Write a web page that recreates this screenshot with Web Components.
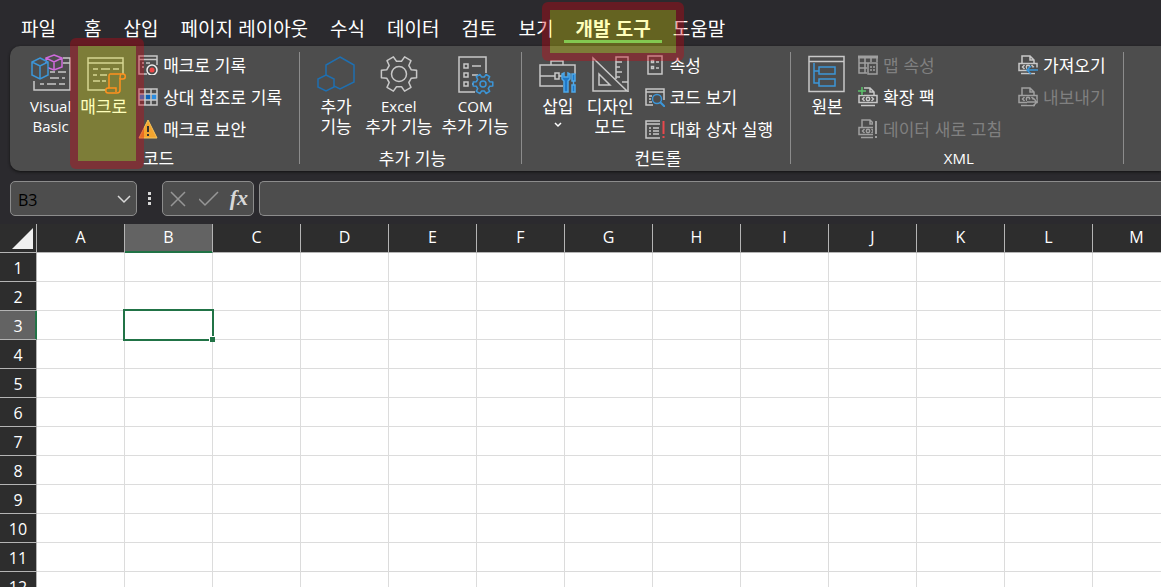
<!DOCTYPE html>
<html lang="ko">
<head>
<meta charset="UTF-8">
<meta name="viewport" content="width=device-width, initial-scale=1.0">
<title>Excel - 개발 도구</title>
<style>
    body {
        margin: 0;
        height: 100vh;
        overflow: hidden;
        background-color: #2b2a2e;
        color: #fff;
        --latin: "Open Sans", "Noto Sans CJK KR", sans-serif;
        --korean: "Noto Sans CJK KR", "Open Sans", sans-serif;
        font-family: var(--latin);
        --ribbon-color: #4d4d4d;
        --line-color: #8c8c8c;
        --header-color: #2d2d2d;
        --header-active: #636363;
        --excel-green: #217346;
    }
</style>
</head>
<body>
<excel-window>
    <ribbon-tab slot="tabs" file>파일</ribbon-tab>
    <ribbon-tab slot="tabs">홈</ribbon-tab>
    <ribbon-tab slot="tabs">삽입</ribbon-tab>
    <ribbon-tab slot="tabs">페이지 레이아웃</ribbon-tab>
    <ribbon-tab slot="tabs">수식</ribbon-tab>
    <ribbon-tab slot="tabs">데이터</ribbon-tab>
    <ribbon-tab slot="tabs">검토</ribbon-tab>
    <ribbon-tab slot="tabs">보기</ribbon-tab>
    <ribbon-tab slot="tabs" active marked>개발 도구</ribbon-tab>
    <ribbon-tab slot="tabs">도움말</ribbon-tab>

    <ribbon-group slot="ribbon" label="코드">
        <ribbon-button icon="visual-basic"><span lang="en">Visual Basic</span></ribbon-button>
        <ribbon-button icon="macro" marked><span>매크로</span></ribbon-button>
        <command-list>
            <ribbon-command icon="record">매크로 기록</ribbon-command>
            <ribbon-command icon="relative">상대 참조로 기록</ribbon-command>
            <ribbon-command icon="warning">매크로 보안</ribbon-command>
        </command-list>
    </ribbon-group>

    <ribbon-group slot="ribbon" label="추가 기능">
        <ribbon-button icon="addins"><span class="wrap">추가 기능</span></ribbon-button>
        <ribbon-button icon="gear"><span lang="en">Excel</span><span>추가 기능</span></ribbon-button>
        <ribbon-button icon="com"><span lang="en">COM</span><span>추가 기능</span></ribbon-button>
    </ribbon-group>

    <ribbon-group slot="ribbon" label="컨트롤">
        <ribbon-button icon="toolbox" menu><span>삽입</span></ribbon-button>
        <ribbon-button icon="design"><span class="wrap">디자인 모드</span></ribbon-button>
        <command-list>
            <ribbon-command icon="properties">속성</ribbon-command>
            <ribbon-command icon="view-code">코드 보기</ribbon-command>
            <ribbon-command icon="run-dialog">대화 상자 실행</ribbon-command>
        </command-list>
    </ribbon-group>

    <ribbon-group slot="ribbon" label="XML">
        <ribbon-button icon="source"><span>원본</span></ribbon-button>
        <command-list>
            <ribbon-command icon="map" disabled>맵 속성</ribbon-command>
            <ribbon-command icon="expansion">확장 팩</ribbon-command>
            <ribbon-command icon="refresh" disabled>데이터 새로 고침</ribbon-command>
        </command-list>
        <command-list>
            <ribbon-command icon="import">가져오기</ribbon-command>
            <ribbon-command icon="export" disabled>내보내기</ribbon-command>
        </command-list>
    </ribbon-group>

    <formula-bar slot="formula" cell="B3"></formula-bar>
    <sheet-grid slot="sheet" columns="13" rows="12" column="B" row="3"></sheet-grid>
</excel-window>

<script>
// outline of a six-tooth gear
function gear(cx, cy, outer, inner) {
    const points = [];
    for (let i = 0; i < 6; i++) {
        const a = i * 60;
        [[a - 19, inner], [a - 12, outer], [a + 12, outer], [a + 19, inner]].forEach(([deg, r]) => {
            const rad = deg * Math.PI / 180;
            points.push((cx + r * Math.cos(rad)).toFixed(1) + "," + (cy + r * Math.sin(rad)).toFixed(1));
        });
    }
    return `<polygon points="${points.join(" ")}" stroke-linejoin="round"/>`;
}

const xmlDoc = `<path d="M4 8V1h8l4 4v3M12 1v4h4M1 8.500h18v7H1zM3 18.500h14" /><path d="M6.500 10 4.500 12l2 2M13.500 10l2 2-2 2"/><circle cx="10" cy="12" r="1.700"/>`;

// large icons are drawn on 40x40, small ones on 20x20
const ICONS = {
    "visual-basic": `<path d="M32 4h7v32H3V27M32 9h7"/><path stroke-width="1.300" d="M19 18h5M27 18h8M19 24h9M31 24h3M9 30h4M16 30h9M28 30h6"/>
        <path fill="#4d4d4d" stroke="#cf6bdd" d="M23 1l8 3v9l-8 3-8-3V4zM15 4l8 4 8-4M23 8v8"/>
        <path fill="#4d4d4d" stroke="#3c96d8" d="M9 4l8 4v13l-8 4-8-4V8zM1 8l8 4 8-4M9 12v13"/>`,
    "macro": `<path d="M22 36H4V4h35v16M4 9h35"/><path stroke-width="1.300" d="M9 15h5M17 15h9M29 15h6M9 21h4M16 21h7M9 27h7M18 27h4"/>
        <g stroke="#ff6a2a" fill="#4d4d4d"><path d="M26 20h13c3 0 3 5 0 5h-3v11c0 2-1 3-3 3H24c-3 0-3-5 0-5h1V22c0-1 0-2 1-2z"/><path d="M37 20c-1 1-1 2-1 5M24 34h8v4"/></g>`,
    "addins": `<g stroke="#1f6fb0"><path d="M24 3l14 8v17l-14 7-14-7V11z"/><path fill="#4d4d4d" d="M10 21l8 4v8l-8 4-8-4v-8z"/></g>`,
    "gear": gear(20, 20, 18, 13) + `<circle cx="20" cy="20" r="7.500"/>`,
    "com": `<path d="M31 19V3H4v35h16M17 12h9M17 21h6M17 30h2"/><path d="M9 10h4v4H9zM9 19h4v4H9zM9 28h4v4H9z"/>
        <g stroke="#3c96d8" fill="#4d4d4d">${gear(28, 30, 10, 7)}<circle cx="28" cy="30" r="3"/></g>`,
    "toolbox": `<path d="M25 32H2V11h35v9M13 11V7h12v4M2 22h15M21 22h5"/><path d="M17 19h4v6h-4z"/>
        <g stroke="#4fa8e8" stroke-width="1.500" fill="#1f78c8"><path d="M24 20v5l2 2v11h4V27l2-2v-5l-2-1v4h-4v-4z"/><path d="M34 20h3v7h-3zM34 31h3v7h-3zM35.500 27v4"/></g>`,
    "design": `<path d="M3 4v33h34z"/><path d="M9 20v11h11z"/><path d="M26 25V3h12v35M26 8h6M26 13h4M26 18h6M26 23h4M32 28h6"/>`,
    "source": `<path d="M2 2.500h35v35H2z"/><path d="M2 7.500h35"/><path stroke="#3c96d8" d="M7 9v20h5M7 17h5M12 13h16v7H12zM12 25h16v7H12z"/>`,
    "record": `<path d="M9 19H1V1h18v9M1 4.500h18M4 8h2M8 8h4M4 12h2"/><circle cx="14" cy="15" r="5" fill="#4d4d4d" stroke="#eee"/><circle cx="14" cy="15" r="2.500" fill="#f04747" stroke="none"/>`,
    "relative": `<path stroke="none" fill="#2b8de0" d="M1 7h5v6H1zM14 7h5v6h-5z"/><path stroke="none" fill="#0b62b8" d="M7 7h6v6H7z"/><path d="M1 2h18v16H1zM1 7h18M1 13h18M7 2v16M13 2v16"/>`,
    "warning": `<path fill="#f3a52f" stroke="#f8c55c" stroke-width="1" stroke-linejoin="round" d="M10 1l9 18H1z"/><path stroke="#333" stroke-width="2" d="M10 7v6M10 15v2"/>`,
    "properties": `<path d="M3 1h14v18H3z"/><path d="M6.500 5.500h2v2h-2zM6.500 11.500h2v2h-2zM11 7h3M11 13h3"/>`,
    "view-code": `<path d="M8 18H1V2h18v11M1 5h18M4 9h3M4 12h2M4 15h3"/><circle cx="12" cy="12" r="4.500" stroke="#3c96d8"/><path stroke="#3c96d8" stroke-width="2" d="M15 15l5 5"/>`,
    "run-dialog": `<path d="M15 2H1v17h14M1 5h14M4 9h2M8 9h6M4 12h2M8 12h6M4 15h2M8 15h6"/><path stroke="#e8484c" stroke-width="2" d="M18.500 2v13M18.500 17v2"/>`,
    "map": `<path stroke-width="3" d="M0 2h20"/><path d="M1 3v15h8M19 3v4M1 8h9M1 13h8M7 3v15M13 3v4M10 8h9v11h-9z"/><path stroke-dasharray="2 1" d="M12 12h5M12 15h5"/>`,
    "expansion": xmlDoc + `<path stroke="#4d4d4d" stroke-width="4" d="M4 0v8M0 4h8"/><path stroke="#5cc46c" d="M4 0v8M0 4h8"/>`,
    "refresh": xmlDoc + `<path stroke="#4d4d4d" stroke-width="5" d="M17.500 2v18"/><path stroke-width="2" d="M18 2v13M18 17v2"/>`,
    "import": xmlDoc + `<path stroke="#4d4d4d" stroke-width="5" d="M20 15H9"/><path stroke="#3c96d8" d="M20 15H9M13 11l-4 4 4 4"/>`,
    "export": xmlDoc + `<path stroke="#4d4d4d" stroke-width="5" d="M9 15h10"/><path d="M9 15h10M15 11l4 4-4 4"/>`
};

function icon(name, size) {
    return `<svg width="${size}" height="${size}" viewBox="0 0 ${size} ${size}" fill="none" stroke="currentColor" stroke-width="1.500" aria-hidden="true">${ICONS[name] || ""}</svg>`;
}

class BaseElement extends HTMLElement {
    constructor() {
        super();
        this.attachShadow({mode: "open"});
    }
    connectedCallback() {
        this.render();
    }
    render() {
        const template = document.createElement("template");
        template.innerHTML = `<style>${this.getStyles()}</style>${this.getTemplate()}`;
        this.shadowRoot.innerHTML = "";
        this.shadowRoot.appendChild(template.content.cloneNode(true));
    }
}

class ExcelWindow extends BaseElement {
    getStyles() {
        return `
            :host { display: block; }
            nav {
                display: flex;
                padding: 16px 0 3px 10px;
            }
            .ribbon {
                display: flex;
                margin-left: 10px;
                padding: 6px 0 7px 4px;
                border-radius: 10px 0 0 10px;
                background-color: var(--ribbon-color);
                box-shadow: 0 1px 3px #111;
            }
            .formula { padding: 10px 0 8px 10px; }
        `;
    }
    getTemplate() {
        return `
            <nav role="tablist"><slot name="tabs"></slot></nav>
            <section class="ribbon"><slot name="ribbon"></slot></section>
            <div class="formula"><slot name="formula"></slot></div>
            <slot name="sheet"></slot>
        `;
    }
}
customElements.define("excel-window", ExcelWindow);

// translucent frame that points at a control
class CalloutFrame extends BaseElement {
    getStyles() {
        return `
            :host {
                position: absolute;
                z-index: 2;
                box-sizing: border-box;
                border: 8px solid rgba(211, 0, 15, 0.35);
                border-radius: 6px;
                background-color: rgba(255, 255, 0, 0.27);
                background-clip: padding-box;
                pointer-events: none;
            }
        `;
    }
    getTemplate() {
        return "";
    }
}
customElements.define("callout-frame", CalloutFrame);

class RibbonTab extends BaseElement {
    getStyles() {
        return `
            :host {
                display: block;
                position: relative;
            }
            :host([file]) { margin-right: 6px; }
            button {
                display: block;
                margin: 0;
                padding: 0 11px;
                border: 0;
                border-bottom: 3px solid transparent;
                background: none;
                color: inherit;
                font: 19px/24px var(--korean);
                white-space: nowrap;
            }
            :host([active]) button {
                border-color: #56b46e;
                font-weight: bold;
            }
            callout-frame { inset: -14px -22px -18px; }
        `;
    }
    getTemplate() {
        return `
            <button type="button" role="tab" aria-selected="${this.hasAttribute("active")}"><slot></slot></button>
            ${this.hasAttribute("marked") ? "<callout-frame></callout-frame>" : ""}
        `;
    }
}
customElements.define("ribbon-tab", RibbonTab);

class RibbonGroup extends BaseElement {
    getStyles() {
        return `
            :host {
                display: flex;
                flex-direction: column;
                gap: 10px;
                padding: 0 10px 0 14px;
                border-right: 1px solid var(--line-color);
            }
            .commands {
                display: flex;
                gap: 5px;
                height: 90px;
            }
            .label {
                font: 17px/12px var(--korean);
                text-align: center;
            }
            .label:lang(en) { font: 15px/12px var(--latin); }
        `;
    }
    getTemplate() {
        const label = this.getAttribute("label") || "";
        const lang = /^[A-Z]+$/.test(label) ? "en" : "ko";
        return `
            <div class="commands"><slot></slot></div>
            <div class="label" lang="${lang}">${label}</div>
        `;
    }
}
customElements.define("ribbon-group", RibbonGroup);

class RibbonButton extends BaseElement {
    getStyles() {
        return `
            :host {
                display: block;
                position: relative;
            }
            button {
                display: flex;
                flex-direction: column;
                align-items: center;
                min-width: 44px;
                height: 100%;
                margin: 0;
                padding: 2px;
                border: 0;
                background: none;
                color: inherit;
                font: 17px/20px var(--korean);
                white-space: nowrap;
            }
            svg {
                flex: none;
                color: #c8c8c8;
                overflow: visible;
            }
            .icon {
                height: 42px;
            }
            ::slotted([lang=en]) {
                width: min-content;
                font: 15px/20px var(--latin);
                white-space: normal;
            }
            ::slotted(.wrap) {
                width: min-content;
                white-space: normal;
                word-break: keep-all;
            }
            .arrow {
                margin-top: 6px;
                color: #fff;
            }
            callout-frame { inset: -14px -15px -27px -8px; }
        `;
    }
    getTemplate() {
        return `
            <button type="button">
                <span class="icon">${icon(this.getAttribute("icon"), 40)}</span>
                <slot></slot>
                ${this.hasAttribute("menu") ? `<svg class="arrow" width="8" height="6" viewBox="0 0 8 6" fill="none" stroke="currentColor" stroke-width="1.500"><path d="M1 1l3 3 3-3"/></svg>` : ""}
            </button>
            ${this.hasAttribute("marked") ? "<callout-frame></callout-frame>" : ""}
        `;
    }
}
customElements.define("ribbon-button", RibbonButton);

class CommandList extends BaseElement {
    getStyles() {
        return `
            :host {
                display: flex;
                flex-direction: column;
                gap: 6px;
                padding: 0 7px 0 4px;
            }
        `;
    }
    getTemplate() {
        return `<slot></slot>`;
    }
}
customElements.define("command-list", CommandList);

class RibbonCommand extends BaseElement {
    getStyles() {
        return `
            :host { display: block; }
            button {
                display: flex;
                align-items: center;
                gap: 5px;
                margin: 0;
                padding: 0;
                border: 0;
                background: none;
                color: inherit;
                font: 17px/26px var(--korean);
                white-space: nowrap;
            }
            svg {
                flex: none;
                color: #c8c8c8;
            }
            button:disabled { color: #808080; }
            button:disabled svg { color: #a0a0a0; }
        `;
    }
    getTemplate() {
        return `
            <button type="button" ${this.hasAttribute("disabled") ? "disabled" : ""}>
                ${icon(this.getAttribute("icon"), 20)}
                <slot></slot>
            </button>
        `;
    }
}
customElements.define("ribbon-command", RibbonCommand);

class FormulaBar extends BaseElement {
    getStyles() {
        return `
            :host {
                display: flex;
                height: 35px;
            }
            .box {
                display: flex;
                align-items: center;
                box-sizing: border-box;
                border: 1px solid var(--line-color);
                border-radius: 5px;
                background-color: var(--ribbon-color);
            }
            .name { width: 127px; padding: 0 5px 0 7px; }
            .actions { width: 92px; padding: 0 5px; justify-content: space-between; }
            .formula {
                flex: 1;
                margin-left: 5px;
                border-right: 0;
                border-radius: 5px 0 0 5px;
            }
            input {
                flex: 1;
                min-width: 0;
                padding: 2px 0 0;
                border: 0;
                outline: 0;
                background: none;
                color: #000;
                font: 16px/20px var(--latin);
            }
            button {
                display: flex;
                margin: 0;
                padding: 0;
                border: 0;
                background: none;
                color: #d8d8d8;
            }
            button:disabled { color: #969696; }
            .fx {
                padding-bottom: 2px;
                font: italic bold 22px/24px "Liberation Serif", serif;
            }
            .dots { margin: 11px 10px; }
        `;
    }
    getTemplate() {
        return `
            <div class="box name">
                <input type="text" value="${this.getAttribute("cell") || ""}" aria-label="이름 상자">
                <button type="button" aria-label="이름 목록"><svg width="14" height="10" viewBox="0 0 14 10" fill="none" stroke="currentColor" stroke-width="1.500"><path d="M1 2l6 6 6-6"/></svg></button>
            </div>
            <svg class="dots" width="5" height="14" viewBox="0 0 5 14" fill="#d8d8d8"><path d="M1 0h3v3H1zM1 5h3v3H1zM1 10h3v3H1z"/></svg>
            <div class="box actions">
                <button type="button" disabled aria-label="취소"><svg width="20" height="20" viewBox="0 0 20 20" fill="none" stroke="currentColor" stroke-width="1.500"><path d="M3 3l14 14M17 3L3 17"/></svg></button>
                <button type="button" disabled aria-label="입력"><svg width="20" height="20" viewBox="0 0 20 20" fill="none" stroke="currentColor" stroke-width="1.500"><path d="M0 10l6 6L19 3"/></svg></button>
                <button type="button" class="fx" aria-label="함수 삽입">fx</button>
            </div>
            <div class="box formula"><input type="text" aria-label="수식 입력줄"></div>
        `;
    }
}
customElements.define("formula-bar", FormulaBar);

class SheetGrid extends BaseElement {
    getStyles() {
        return `
            :host {
                display: block;
                overflow: hidden;
            }
            table {
                table-layout: fixed;
                width: 0;
                border-collapse: separate;
                border-spacing: 0;
                background-color: #fff;
            }
            col { width: 88px; }
            col:first-child { width: 37px; }
            th, td {
                box-sizing: border-box;
                height: 29px;
                padding: 0;
                border: solid #dcdcdc;
                border-width: 0 1px 1px 0;
            }
            th {
                border-color: #b4b4b4;
                background-color: var(--header-color);
                font-size: 16px;
                font-weight: normal;
                line-height: 20px;
            }
            thead th { padding-bottom: 2px; }
            tbody th { padding-top: 2px; }
            thead th.active {
                background-color: var(--header-active);
                box-shadow: inset 0 -1px var(--excel-green);
                border-bottom-color: var(--excel-green);
            }
            tbody th.active {
                background-color: var(--header-active);
                box-shadow: inset -1px 0 var(--excel-green);
                border-right-color: var(--excel-green);
            }
            thead th.corner { padding: 0; }
            .corner svg { display: block; margin: 4px 0 3px 12px; }
            .selected { position: relative; }
            .selected::before {
                content: "";
                position: absolute;
                inset: -2px;
                border: 2px solid var(--excel-green);
            }
            .selected::after {
                content: "";
                position: absolute;
                right: -3px;
                bottom: -3px;
                width: 5px;
                height: 5px;
                border: solid #fff;
                border-width: 1px 0 0 1px;
                background-color: var(--excel-green);
            }
        `;
    }
    getTemplate() {
        const names = Array.from({length: Number(this.getAttribute("columns"))}, (_, i) => String.fromCharCode(65 + i));
        const rows = Array.from({length: Number(this.getAttribute("rows"))}, (_, i) => String(i + 1));
        const column = this.getAttribute("column");
        const row = this.getAttribute("row");
        return `
            <table>
                <colgroup><col>${names.map(() => "<col>").join("")}</colgroup>
                <thead><tr>
                    <th class="corner"><svg width="21" height="21" viewBox="0 0 21 21"><path fill="#f0f0f0" d="M21 0v21H0z"/></svg></th>
                    ${names.map(n => `<th scope="col" class="${n === column ? "active" : ""}">${n}</th>`).join("")}
                </tr></thead>
                <tbody>
                    ${rows.map(r => `<tr><th scope="row" class="${r === row ? "active" : ""}">${r}</th>${names.map(n => `<td class="${n === column && r === row ? "selected" : ""}"></td>`).join("")}</tr>`).join("")}
                </tbody>
            </table>
        `;
    }
}
customElements.define("sheet-grid", SheetGrid);
</script>
</body>
</html>
